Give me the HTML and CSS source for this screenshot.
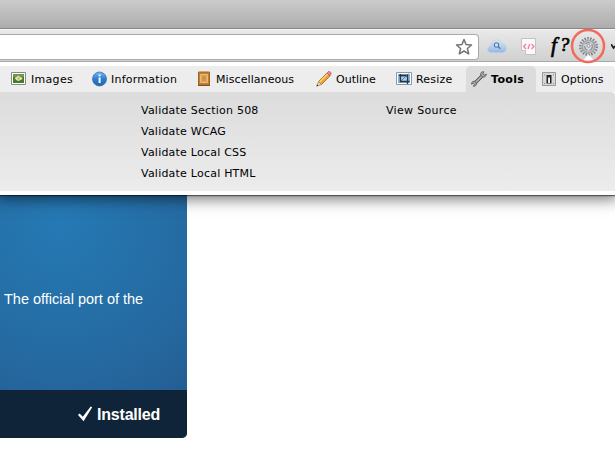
FILE: index.html
```html
<!DOCTYPE html>
<html lang="en">
<head>
<meta charset="utf-8">
<title>Web Developer</title>
<link rel="stylesheet" href="styles.css">
</head>
<body>
<div class="titlebar"></div>
<div class="toolbar">
  <div class="address">
    <svg width="18" height="18" viewBox="0 0 18 18"><path d="M9 1.5l2.1 5.1 5.4.4-4.1 3.5 1.3 5.4L9 13l-4.7 2.9 1.3-5.4L1.5 7l5.4-.4z" fill="#fff" stroke="#747474" stroke-width="1.5" stroke-linejoin="round"/></svg>
  </div>
  <svg class="ext cloud" width="20" height="16" viewBox="0 0 20 16"><defs><linearGradient id="cl" x2="0" y2="1"><stop stop-color="#d9e9fa"/><stop offset="1" stop-color="#94b8e2"/></linearGradient></defs><path d="M4 14.500C1.700 14.500.7 13 .8 11.300 1 9.500 2.200 8.500 3.600 8.300 4 4.500 6 2 9.500 2c3 0 5 1.500 5.500 4 2.600.1 4.300 1.700 4.300 4.300 0 2.800-1.800 4.200-4.300 4.200z" fill="url(#cl)" stroke="#b2cbe7" stroke-width=".6"/><circle cx="9.500" cy="7" r="2.200" fill="#c9e2f8" stroke="#567aa6" stroke-width="1.100"/><path d="M11.100 8.600l2.200 2.200" stroke="#567aa6" stroke-width="1.400"/></svg>
  <svg class="ext code" width="16" height="18" viewBox="0 0 16 18"><path d="M.5.500h14v16h-10l-4-4z" fill="#fafafa" stroke="#c2c2c2"/><path d="M.5 12.500h4v4" fill="#e5e5e5" stroke="#c2c2c2"/><path d="M5 6L2.600 8.500 5 11M10.500 6l2.400 2.500-2.400 2.500M8.700 6L7 11" fill="none" stroke="#f08296" stroke-width="1.300"/></svg>
  <div class="ext whatfont"><i>f</i><i class="q">?</i></div>
  <div class="ext gearwrap">
    <svg width="36" height="36" viewBox="0 0 36 36"><circle cx="18.500" cy="18.500" r="8.200" fill="none" stroke="#7b8086" stroke-width="2.600" stroke-dasharray="1.500 1.360"/><circle cx="18.500" cy="18.500" r="6.200" fill="#c5c8cb" stroke="#a4a8ac" stroke-width="1.600"/><circle cx="18.500" cy="18.500" r="3.800" fill="#d8d9dc" stroke="#898e96" stroke-width="1.200" stroke-dasharray="5 2"/><circle cx="18.500" cy="18" r="1.500" fill="#eee" stroke="#8b9098" stroke-width=".9"/><path d="M12.500 33l6-6.500 6 6.500z" fill="#fff"/><circle cx="18" cy="18" r="16" fill="none" stroke="#f26a5c" stroke-width="2.500"/></svg>
  </div>
  <svg class="ext more" width="4" height="6" viewBox="0 0 4 6"><path d="M0 0l2.500 4L4 2" fill="none" stroke="#222" stroke-width="1.800"/></svg>
</div>
<div class="popup">
  <div class="tabs">
    <div class="tab wide"><svg width="16" height="16" viewBox="0 0 16 16"><path d="M.5 1.500h14v12H.5z" fill="#fff" stroke="#888"/><path d="M2 3h11v9H2z" fill="#477b27"/><path d="M2 3h11v3H2z" fill="#6e9845"/><path d="M3.500 7l2-1 2-1.500L9 6l2 .5.500 1.500-2 1-2 1-2-.8z" fill="#dfe6cc"/><circle cx="7.500" cy="7.500" r="1.200" fill="#e0ac4b"/></svg><span>Images</span></div>
    <div class="tab info"><svg width="16" height="16" viewBox="0 0 16 16"><defs><linearGradient id="inf" x2="0" y2="1"><stop stop-color="#78b8ed"/><stop offset=".5" stop-color="#2c7dce"/><stop offset="1" stop-color="#2265b4"/></linearGradient></defs><circle cx="7.500" cy="8" r="7" fill="url(#inf)" stroke="#2b68aa" stroke-width=".7"/><path d="M6.600 3.500h2v1.800h-2zM6.600 6.500h2v5.500h-2z" fill="#fff"/></svg><span>Information</span></div>
    <div class="tab misc"><svg width="16" height="16" viewBox="0 0 16 16"><path d="M1.500 1h11v13h-11z" fill="#c4812d" stroke="#9c6424"/><path d="M3.500 3.500h7v8h-7z" fill="#dba45a" stroke="#ecba78"/><path d="M5.500 6h3M5.500 7.500h3M5.500 9h3" fill="none" stroke="#b98038" stroke-width=".8"/><path d="M1 14.500h12" stroke="#795028"/></svg><span>Miscellaneous</span></div>
    <div class="tab"><svg width="16" height="16" viewBox="0 0 16 16"><path d="M2.500 10.500L11 2l3 3-8.500 8.500z" fill="#eda239" stroke="#a9651d" stroke-width=".8"/><path d="M3.700 11L12 2.700" stroke="#ffda80" stroke-width="1.200"/><path d="M11 2l1.500-1.500c1-.7 3 1 2.600 2.300L14 5z" fill="#df8791" stroke="#a95e67" stroke-width=".7"/><path d="M2.500 10.500l3 3L.7 15.200z" fill="#ecd4a5" stroke="#9b7850" stroke-width=".6"/><path d="M1.200 13.500l1.300 1-2 .8z" fill="#222"/></svg><span>Outline</span></div>
    <div class="tab resize"><svg width="16" height="16" viewBox="0 0 16 16"><path d="M.5 1.500h15v12H.5z" fill="#fff" stroke="#8d98a5"/><path d="M2 3h12v9H2z" fill="#83afd8"/><path d="M5 6h6v4H5z" fill="#a9cff0"/><path d="M3 4.500h8.500V13M4.500 3v7.500H13.500" fill="none" stroke="#263746" stroke-width="1.300"/><path d="M5 10l7.500-7.500" stroke="#405468" stroke-width=".7"/></svg><span>Resize</span></div>
    <div class="tab active"><svg width="16" height="16" viewBox="0 0 16 16"><path d="M3 13L12 4" stroke="#505050" stroke-width="3.400"/><path d="M3 13L12 4" stroke="#bbb" stroke-width="1.600"/><path d="M13 .8c-2.500-.3-3.700 1-3.300 3 .4 1.700 2 2.700 3.600 2.200 1.400-.4 2-1.500 2-3l-2.100 1.100-1.300-1.200zM3 10.200c-1.700.2-2.600 1.400-2.500 3l1.800-.8 1.100 1.100-1 1.900c1.700 0 3-.9 3-2.500 0-1.500-1-2.700-2.400-2.700z" fill="#aaa" stroke="#555" stroke-width=".8"/></svg><span>Tools</span></div>
    <div class="tab"><svg width="16" height="16" viewBox="0 0 16 16"><path d="M1.500 1.500h13v13h-13z" fill="#d8d8d8" stroke="#999"/><path d="M5.500 4h5v8.500h-5z" fill="#222"/><path d="M7 6.500h2V12H7z" fill="#eee"/><path d="M3 12.500h1M12 12.500h1M3 4h1M12 4h1" stroke="#888"/></svg><span>Options</span></div>
  </div>
  <div class="panel">
    <ul class="left"><li>Validate Section 508</li><li>Validate WCAG</li><li>Validate Local CSS</li><li>Validate Local HTML</li></ul>
    <ul class="right"><li>View Source</li></ul>
  </div>
</div>
<div class="card">
  <p class="blurb">The official port of the</p>
  <div class="status"><svg width="15" height="16" viewBox="0 0 15 16"><path d="M0 9l1.600-1.600 3.200 3.400L12.700.6l1.500.7L5.600 15.200z" fill="#fff"/></svg><span>Installed</span></div>
</div>
</body>
</html>
```
FILE: styles.css
```css
* { box-sizing: border-box; }
body { margin: 0; width: 615px; height: 450px; overflow: hidden; background: #fff; color: #000; font: 11px/21px "DejaVu Sans", sans-serif; }
svg { display: block; flex: none; }
.titlebar { height: 29px; background: linear-gradient(#cbcbcb, #adadad); border-bottom: 1px solid #888; }
.toolbar { display: flex; height: 33px; align-items: flex-start; background: linear-gradient(#e9e9e9, #d0d0d0); border-top: 1px solid #f6f6f6; border-bottom: 1px solid #a9a9a9; }
.address { display: flex; justify-content: flex-end; width: 479px; height: 26px; margin-top: 4px; padding: 3px 5px 0 0; background: #fff; border: 1px solid #aaa; border-left: 0; border-radius: 0 4px 4px 0; }
.ext { flex: none; }
.cloud { margin: 8px 0 0 8px; }
.code { margin: 8px 0 0 14px; }
.whatfont { display: flex; width: 30px; margin: 4px 0 0 8px; padding-left: 6px; font: 21px/22px "Liberation Serif", serif; -webkit-text-stroke: .7px #000; }
.whatfont .q { margin-left: 3px; font-size: 19px; }
.gearwrap { position: relative; z-index: 3; width: 36px; height: 36px; margin: -2px 0 0 -5px; }
.more { margin: 14px 0 0 5px; }
.popup { position: relative; z-index: 2; height: 133px; padding: 4px 0; background: #fff; box-shadow: 0 1px 1px rgba(0,0,0,.5), 0 1px 14px 3px rgba(0,0,0,.55); clip-path: inset(0 0 -24px 0); }
.tabs { display: grid; grid-template-columns: 81px 105px 119px 80px 75px 70px 79px; height: 26px; padding-left: 6px; background: #ededed; border-top-right-radius: 4px; }
.tab { display: flex; align-items: flex-start; gap: 4px; padding: 5px 0 0 5px; white-space: nowrap; line-height: 18px; }
.wide { letter-spacing: .3px; }
.info { gap: 3px; letter-spacing: .22px; }
.misc { gap: 3px; letter-spacing: .08px; }
.resize { letter-spacing: .2px; }
.active { background: #dcdcdc; border-radius: 5px 5px 0 0; font-weight: bold; letter-spacing: .35px; }
.panel { display: flex; height: 99px; padding: 8px 0 0 141px; background: linear-gradient(#dcdcdc, #ececec); border-top-right-radius: 4px; letter-spacing: .22px; }
ul { margin: 0; padding: 0; list-style: none; white-space: nowrap; }
.left { width: 245px; }
.right { letter-spacing: .32px; }
.card { display: flex; flex-direction: column; justify-content: space-between; width: 187px; height: 243px; background: radial-gradient(circle at 60px 30px, #2579b4, #25689f 150px, #225588 260px); border-radius: 0 0 5px 0; overflow: hidden; font-family: "Liberation Sans", sans-serif; color: #fff; }
.blurb { margin: 95px 0 0 4px; font-size: 14.5px; line-height: 18px; white-space: nowrap; }
.status { display: flex; gap: 4px; height: 48px; padding: 16px 0 0 78px; background: #0f2439; font-size: 16px; line-height: 18px; font-weight: bold; letter-spacing: -.2px; }
```
